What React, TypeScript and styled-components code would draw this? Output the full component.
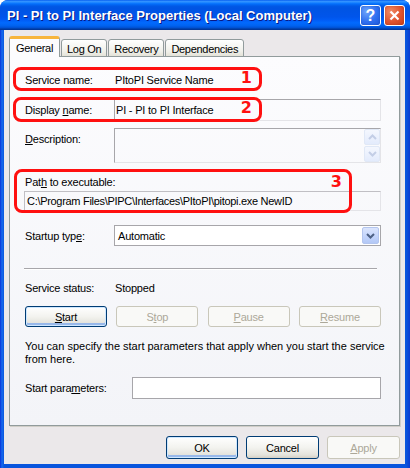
import styled, { createGlobalStyle } from "styled-components";

const GlobalStyle = createGlobalStyle`
  html, body {
    margin: 0;
    padding: 0;
    background: #ffffff;
  }
  body {
    font-family: "Liberation Sans", Arial, sans-serif;
    font-size: 11px;
    color: #000;
  }
  * {
    box-sizing: border-box;
  }
`;

const Chevron = ({ up = false, color }: { up?: boolean; color: string }) => (
  <svg width="9" height="6" viewBox="0 0 9 6">
    <path
      d={up ? "M1 5 L4.5 1.5 L8 5" : "M1 1 L4.5 4.5 L8 1"}
      fill="none"
      stroke={color}
      strokeWidth="2"
    />
  </svg>
);

const App = () => {
  return (
    <>
      <GlobalStyle />
      <Window>
        <TitleBar>
          <TitleText>PI - PI to PI Interface Properties (Local Computer)</TitleText>
          <CaptionButton>
            <HelpMark>?</HelpMark>
          </CaptionButton>
          <CaptionButton $close>
            <svg width="11" height="11" viewBox="0 0 11 11">
              <path d="M1.5 1.5 L9.5 9.5 M9.5 1.5 L1.5 9.5" stroke="#fff" strokeWidth="2.2" />
            </svg>
          </CaptionButton>
        </TitleBar>

        <Frame>
          <TabStrip>
            <Tab $active>General</Tab>
            <Tab>Log On</Tab>
            <Tab>Recovery</Tab>
            <Tab>Dependencies</Tab>
          </TabStrip>

          <Panel>
            <Row $labelWidth={89} $height={22}>
              <Label>Service name:</Label>
              <Value>PItoPI Service Name</Value>
            </Row>

            <Row $labelWidth={89} $height={22} $top={8}>
              <Label>
                Display <Key>n</Key>ame:
              </Label>
              <ReadField>PI - PI to PI Interface</ReadField>
            </Row>

            <Row $labelWidth={89} $height={35} $top={7}>
              <Label $alignTop>
                <Key>D</Key>escription:
              </Label>
              <TextArea>
                <ScrollBar>
                  <ScrollButton>
                    <Chevron up color="#C3CEE6" />
                  </ScrollButton>
                  <ScrollButton>
                    <Chevron color="#C3CEE6" />
                  </ScrollButton>
                </ScrollBar>
              </TextArea>
            </Row>

            <BlockLabel>
              Pat<Key>h</Key> to executable:
            </BlockLabel>
            <PathField>C:\Program Files\PIPC\Interfaces\PItoPI\pitopi.exe NewID</PathField>

            <Row $labelWidth={89} $height={21} $top={14}>
              <Label>
                Startup typ<Key>e</Key>:
              </Label>
              <Combo>
                <ComboText>Automatic</ComboText>
                <ComboArrow>
                  <Chevron color="#4D6185" />
                </ComboArrow>
              </Combo>
            </Row>

            <Separator />

            <Row $labelWidth={89} $height={14} $top={11}>
              <Label>Service status:</Label>
              <Value>Stopped</Value>
            </Row>

            <ServiceButtons>
              <PushButton $width={82} $height={21} $focused>
                <Key>S</Key>tart
              </PushButton>
              <PushButton $width={82} $height={21} disabled>
                S<Key>t</Key>op
              </PushButton>
              <PushButton $width={82} $height={21} disabled>
                <Key>P</Key>ause
              </PushButton>
              <PushButton $width={82} $height={21} disabled>
                <Key>R</Key>esume
              </PushButton>
            </ServiceButtons>

            <Hint>
              You can specify the start parameters that apply when you start the service
              <br />
              from here.
            </Hint>

            <Row $labelWidth={107} $height={22} $top={11}>
              <Label>
                Start para<Key>m</Key>eters:
              </Label>
              <EditField />
            </Row>

            <Annotation $left={3} $top={10} $width={249} $height={24}>
              <Number>1</Number>
            </Annotation>
            <Annotation $left={3} $top={40} $width={249} $height={25}>
              <Number>2</Number>
            </Annotation>
            <Annotation $left={4} $top={112} $width={338} $height={44} $numberTop={2}>
              <Number>3</Number>
            </Annotation>
          </Panel>

          <Footer>
            <PushButton $width={72} $height={23} $focused>
              OK
            </PushButton>
            <PushButton $width={73} $height={23}>
              Cancel
            </PushButton>
            <PushButton $width={73} $height={23} disabled>
              <Key>A</Key>pply
            </PushButton>
          </Footer>
        </Frame>
      </Window>
    </>
  );
};

export default App;

const Window = styled.div`
  width: 410px;
  height: 468px;
  display: flex;
  flex-direction: column;
  background: linear-gradient(to right, #0831d9, #166aee 2px, #0855dd 4px, #0855dd calc(100% - 4px), #0a3ad0);
  border-radius: 8px 8px 0 0;
  overflow: hidden;
`;

const TitleBar = styled.div`
  height: 30px;
  flex-shrink: 0;
  display: flex;
  align-items: center;
  gap: 3px;
  padding: 1px 5px 0 7px;
  background: linear-gradient(
    to bottom,
    #0058ee 0%,
    #3593ff 4%,
    #288eff 7%,
    #127dff 10%,
    #036ffc 13%,
    #0262ee 17%,
    #0057e5 22%,
    #0054e3 28%,
    #0055eb 56%,
    #005bf5 66%,
    #026afe 76%,
    #0062ef 86%,
    #0052d6 92%,
    #0040ab 96%,
    #003092 100%
  );
`;

const TitleText = styled.div`
  flex: 1;
  color: #ffffff;
  font-family: "Liberation Sans", Arial, sans-serif;
  font-weight: 700;
  font-size: 13px;
  text-shadow: 1px 1px 0 #0a1883;
  white-space: nowrap;
`;

const CaptionButton = styled.div<{ $close?: boolean }>`
  width: 21px;
  height: 21px;
  border: 1px solid #ffffff;
  border-radius: 3px;
  display: flex;
  align-items: center;
  justify-content: center;
  background: ${({ $close }) =>
    $close
      ? "radial-gradient(circle at 30% 30%, #f08a64, #e0532e 55%, #c63d18)"
      : "radial-gradient(circle at 30% 30%, #6ea4fa, #2f6ff0 55%, #1b56d8)"};
  box-shadow: inset 0 0 2px rgba(0, 0, 0, 0.2);
`;

const HelpMark = styled.span`
  color: #ffffff;
  font-family: "Liberation Sans", Arial, sans-serif;
  font-weight: 700;
  font-size: 16px;
  line-height: 16px;
`;

const Frame = styled.div`
  flex: 1;
  display: flex;
  flex-direction: column;
  margin: 0 5px 4px 4px;
  padding: 6px 5px 0 5px;
  background: #ebe8ea;
`;

const TabStrip = styled.div`
  display: flex;
  align-items: flex-end;
  height: 21px;
  margin-bottom: -1px;
  position: relative;
  z-index: 1;
`;

const Tab = styled.div<{ $active?: boolean }>`
  height: ${({ $active }) => ($active ? "21px" : "18px")};
  padding: ${({ $active }) => ($active ? "3px 6px 0" : "3px 5px 0")};
  margin-right: 1px;
  border: 1px solid #919b9c;
  border-bottom: ${({ $active }) => ($active ? "none" : "1px solid #919b9c")};
  border-top: ${({ $active }) => ($active ? "3px solid #f7b53c" : "1px solid #919b9c")};
  border-radius: 3px 3px 0 0;
  background: ${({ $active }) =>
    $active ? "#fcfcfe" : "linear-gradient(to bottom, #ffffff, #f0f0ea 70%, #e4e2d8)"};
  font-size: 11px;
  letter-spacing: -0.3px;
  white-space: nowrap;
`;

const Panel = styled.div`
  position: relative;
  height: 370px;
  flex-shrink: 0;
  padding: 12px 18px 0 15px;
  border: 1px solid #919b9c;
  background: linear-gradient(to bottom, #fcfcfe, #f3f4f8);
  box-shadow: 1px 1px 0 #d0cec8;
`;

const Row = styled.div<{ $labelWidth: number; $height: number; $top?: number }>`
  display: grid;
  grid-template-columns: ${({ $labelWidth }) => $labelWidth}px 1fr;
  align-items: center;
  height: ${({ $height }) => $height}px;
  margin-top: ${({ $top }) => $top ?? 0}px;
`;

const Label = styled.div<{ $alignTop?: boolean }>`
  letter-spacing: -0.2px;
  white-space: nowrap;
  align-self: ${({ $alignTop }) => ($alignTop ? "start" : "center")};
  padding-top: ${({ $alignTop }) => ($alignTop ? "5px" : "0")};
`;

const Key = styled.span`
  text-decoration: underline;
`;

const Value = styled.div`
  padding-left: 1px;
  letter-spacing: -0.2px;
  white-space: nowrap;
`;

const ReadField = styled.div`
  height: 100%;
  display: flex;
  align-items: center;
  padding-left: 1px;
  border: 1px solid;
  border-color: #a7a6aa #e4e4e8 #e4e4e8 #a7a6aa;
  letter-spacing: -0.2px;
  white-space: nowrap;
`;

const TextArea = styled.div`
  height: 100%;
  display: flex;
  justify-content: flex-end;
  border: 1px solid;
  border-color: #a7a6aa #e4e4e8 #e4e4e8 #a7a6aa;
`;

const ScrollBar = styled.div`
  width: 16px;
  display: flex;
  flex-direction: column;
  gap: 1px;
`;

const ScrollButton = styled.div`
  flex: 1;
  display: flex;
  align-items: center;
  justify-content: center;
  border: 1px solid #e0e8f6;
  border-radius: 2px;
  background: linear-gradient(to bottom, #f4f7fe, #e3ebfc);
`;

const BlockLabel = styled.div`
  margin-top: 12px;
  height: 14px;
  line-height: 14px;
  letter-spacing: -0.2px;
`;

const PathField = styled.div`
  margin: 2px 0 0 -1px;
  height: 20px;
  display: flex;
  align-items: center;
  padding-left: 2px;
  border: 1px solid;
  border-color: #c0bfc4 #e4e4e8 #e4e4e8 #c0bfc4;
  letter-spacing: -0.3px;
  white-space: nowrap;
`;

const Combo = styled.div`
  height: 100%;
  display: flex;
  align-items: stretch;
  border: 1px solid #a7a6aa;
  background: #ffffff;
`;

const ComboText = styled.div`
  flex: 1;
  display: flex;
  align-items: center;
  padding-left: 3px;
  letter-spacing: -0.2px;
`;

const ComboArrow = styled.div`
  width: 17px;
  margin: 1px;
  display: flex;
  align-items: center;
  justify-content: center;
  border: 1px solid #b3c5ee;
  border-radius: 2px;
  background: linear-gradient(to bottom, #dbe5fd, #c1d3fb 60%, #b3c8f6);
`;

const Separator = styled.div`
  margin: 22px 4px 0 -1px;
  border-top: 1px solid #a7a6aa;
  border-bottom: 1px solid #ffffff;
`;

const ServiceButtons = styled.div`
  display: flex;
  justify-content: space-between;
  margin-top: 11px;
`;

const PushButton = styled.button<{ $width: number; $height: number; $focused?: boolean }>`
  width: ${({ $width }) => $width}px;
  height: ${({ $height }) => $height}px;
  padding: 0;
  font-family: "Liberation Sans", Arial, sans-serif;
  font-size: 11px;
  letter-spacing: -0.2px;
  color: #000;
  border: 1px solid #003c74;
  border-radius: 3px;
  background: linear-gradient(to bottom, #ffffff, #f3f3ef 50%, #e4e3dc 85%, #d6d0c5);
  box-shadow: ${({ $focused }) =>
    $focused ? "inset 0 0 0 1px #cee7ff, inset 0 -2px 0 1px #98b8ea" : "none"};

  &:disabled {
    color: #aca899;
    border-color: #c9c7ba;
    background: #f9f9f7;
    box-shadow: none;
  }
`;

const Hint = styled.div`
  margin-top: 13px;
  line-height: 13px;
  letter-spacing: 0;
  white-space: nowrap;
`;

const EditField = styled.div`
  height: 100%;
  border: 1px solid #a7a6aa;
  background: #ffffff;
`;

const Annotation = styled.div<{
  $left: number;
  $top: number;
  $width: number;
  $height: number;
  $numberTop?: number;
}>`
  position: absolute;
  left: ${({ $left }) => $left}px;
  top: ${({ $top }) => $top}px;
  width: ${({ $width }) => $width}px;
  height: ${({ $height }) => $height}px;
  border: 3px solid #ff1010;
  border-radius: 8px;
  display: flex;
  justify-content: flex-end;
  align-items: flex-start;
  padding: ${({ $numberTop }) => $numberTop ?? 0}px 7px 0 0;
  pointer-events: none;
`;

const Number = styled.span`
  color: #ff1010;
  font-family: "DejaVu Sans", Verdana, sans-serif;
  font-weight: 700;
  font-size: 16px;
  line-height: 16px;
`;

const Footer = styled.div`
  display: flex;
  justify-content: flex-end;
  gap: 8px;
  margin-top: 10px;
`;
